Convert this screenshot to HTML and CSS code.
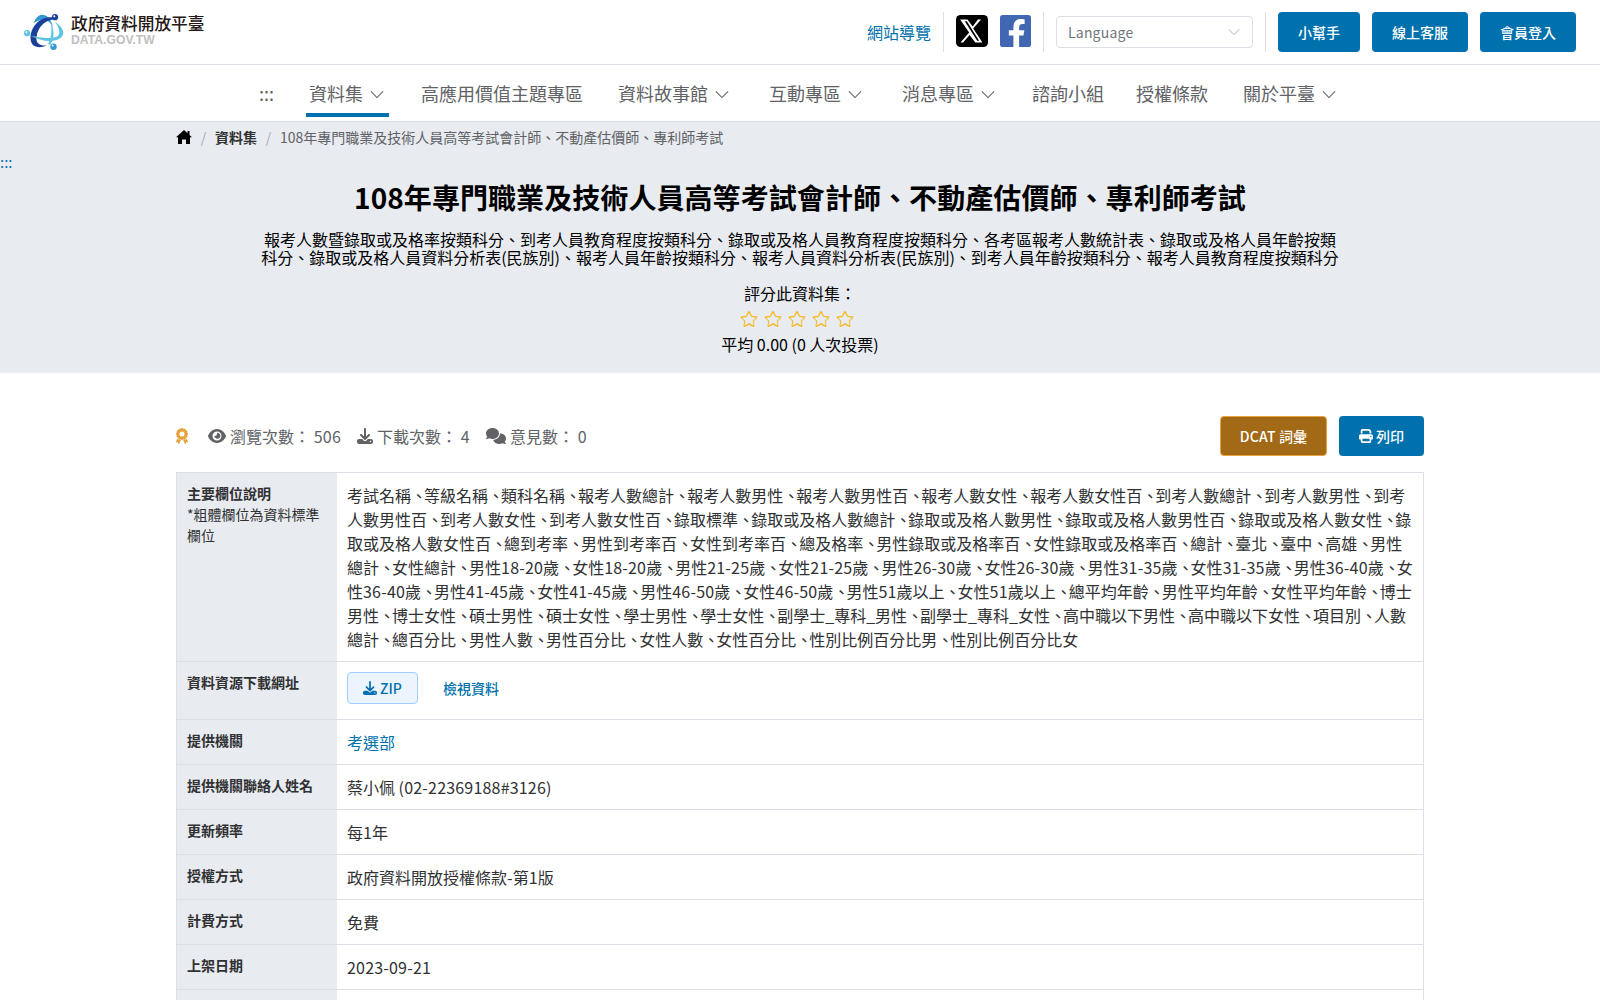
FILE: index.html
```
<!DOCTYPE html>
<html lang="zh-Hant-TW">
<head>
  <meta charset="UTF-8">
  <meta name="viewport" content="width=device-width, initial-scale=1.0">
  <title>108年專門職業及技術人員高等考試會計師、不動產估價師、專利師考試 | 政府資料開放平臺</title>
  <link rel="stylesheet" href="styles.css">
</head>
<body>

  <!-- shared icons -->
  <svg class="sprite" xmlns="http://www.w3.org/2000/svg">
    <symbol id="arrow" viewBox="0 0 16 10"><path d="M1 1.5l7 7 7-7" fill="none" stroke="currentColor" stroke-width="1.2"/></symbol>
    <symbol id="star" viewBox="0 0 576 512"><path fill="currentColor" d="M528.1 171.5L382 150.2 316.700 17.800c-11.700-23.600-45.600-23.900-57.400 0L194 150.200 47.900 171.500c-26.200 3.800-36.700 36.100-17.700 54.600l105.700 103-25 145.500c-4.500 26.300 23.200 46 46.400 33.700L288 439.600l130.700 68.700c23.200 12.200 50.900-7.400 46.400-33.700l-25-145.500 105.700-103c19-18.500 8.500-50.800-17.700-54.600zM405.100 317.500l24.500 142.800L288 385.300 146.400 460.300 170.900 317.500 64 213.300 212.500 191.700 288 60 363.500 191.700 512 213.300z"/></symbol>
    <symbol id="download" viewBox="0 0 512 512"><path fill="currentColor" d="M288 32c0-17.700-14.300-32-32-32s-32 14.300-32 32v242.700l-73.400-73.400c-12.500-12.500-32.800-12.500-45.300 0s-12.500 32.800 0 45.300l128 128c12.500 12.500 32.800 12.500 45.300 0l128-128c12.500-12.500 12.500-32.800 0-45.300s-32.800-12.500-45.300 0L288 274.700V32zM64 352c-35.300 0-64 28.700-64 64v32c0 35.300 28.700 64 64 64h384c35.300 0 64-28.700 64-64v-32c0-35.300-28.700-64-64-64H346.500l-45.300 45.300c-25 25-65.500 25-90.500 0L165.500 352H64zm368 56a24 24 0 1 1 0 48 24 24 0 1 1 0-48z"/></symbol>
  </svg>

  <header class="header">
    <a class="logo" href="#">
      <svg class="logo-mark" viewBox="0 0 40 36">
        <path d="M10 9C13-2 25-3 29 13c-4-7-9-10-19-4z" fill="#3597d3"/>
        <path d="M29 3.500C16 2 6.500 13 6.500 24c0 9 8 11 16 7.500-7 .5-11-3-10-8.500C13.500 15 19 7 29 5.500z" fill="#1b409a"/>
        <path d="M31 8c13 8 10 19-5 19-7 0-13-2-20-5.500 9 2 28 5 29-1.500 1-4-1-8-4-12z" fill="#5dc4e5"/>
        <path d="M27 9c4 9 3 17-1 22l-2-1c3-5 4-12 3-21z" fill="#5dc4e5"/>
        <circle cx="31" cy="3.200" r="3.100" fill="#1b409a"/>
        <circle cx="3.100" cy="19.200" r="3.100" fill="#5dc4e5"/>
        <circle cx="29.500" cy="32.700" r="3.200" fill="#3597d3"/>
        <circle cx="30.300" cy="2.300" r="1" fill="#fff"/><circle cx="2.300" cy="18.300" r="1" fill="#fff"/><circle cx="28.600" cy="31.600" r="1" fill="#fff"/>
      </svg>
      <span class="logo-text"><strong>政府資料開放平臺</strong><small>DATA.GOV.TW</small></span>
    </a>
    <div class="tools">
      <a class="sitemap" href="#">網站導覽</a>
      <div class="social">
        <svg viewBox="0 0 448 448"><rect width="448" height="448" rx="64"/><path fill="#fff" d="M351 64L241.100 189.600 370.300 384H270l-79.800-104.400L99 384H62l122-139.500L57 64h104l72.200 95.500L307 64zM323.700 362L151.900 86H123l173.800 276z"/></svg>
        <svg class="facebook" viewBox="0 0 448 448" preserveAspectRatio="none"><rect width="448" height="448" rx="40" fill="#4267b2"/><path fill="#fff" d="M194 448V288h-66v-73h66v-43c0-78 35-115 112-115 15 0 40 3 50 6v64c-5-1-15-1-27-1-38 0-53 14-53 52v37h76l-13 73h-63v160z"/></svg>
      </div>
      <div class="language"><span>Language</span><svg class="arrow"><use href="#arrow"/></svg></div>
      <div class="buttons">
        <a class="btn" href="#">小幫手</a>
        <a class="btn" href="#">線上客服</a>
        <a class="btn" href="#">會員登入</a>
      </div>
    </div>
  </header>

  <nav class="nav">
    <a class="key" href="#">:::</a>
    <a class="drop active" href="#">資料集<svg class="arrow"><use href="#arrow"/></svg></a>
    <a href="#">高應用價值主題專區</a>
    <a class="drop" href="#">資料故事館<svg class="arrow"><use href="#arrow"/></svg></a>
    <a class="drop" href="#">互動專區<svg class="arrow"><use href="#arrow"/></svg></a>
    <a class="drop" href="#">消息專區<svg class="arrow"><use href="#arrow"/></svg></a>
    <a href="#">諮詢小組</a>
    <a href="#">授權條款</a>
    <a class="drop" href="#">關於平臺<svg class="arrow"><use href="#arrow"/></svg></a>
  </nav>

  <section class="hero">
    <div class="breadcrumb">
      <svg class="home" viewBox="0 0 16 14"><path d="M8 0L0 7.200h2V14h4V9.500h4V14h4V7.200h2L13.500 5V1h-2v2.200z"/></svg>
      <i>/</i><b>資料集</b><i>/</i><span>108年專門職業及技術人員高等考試會計師、不動產估價師、專利師考試</span>
    </div>
    <a class="content-key" href="#">:::</a>
    <h1>108年專門職業及技術人員高等考試會計師、不動產估價師、專利師考試</h1>
    <p class="summary">報考人數暨錄取或及格率按類科分、到考人員教育程度按類科分、錄取或及格人員教育程度按類科分、各考區報考人數統計表、錄取或及格人員年齡按類<br>科分、錄取或及格人員資料分析表(民族別)、報考人員年齡按類科分、報考人員資料分析表(民族別)、到考人員年齡按類科分、報考人員教育程度按類科分</p>
    <div class="rating">評分此資料集：</div>
    <div class="stars">
      <svg><use href="#star"/></svg><svg><use href="#star"/></svg><svg><use href="#star"/></svg><svg><use href="#star"/></svg><svg><use href="#star"/></svg>
    </div>
    <div class="average">平均 0.00 (0 人次投票)</div>
  </section>

  <main class="container">
    <div class="info">
      <svg class="medal" viewBox="0 0 384 512"><path fill-rule="evenodd" d="M173.800 5.500c11-7.300 25.400-7.300 36.400 0L228 17.200c6 3.900 13 5.800 20.100 5.400l21.300-1.300c13.200-.8 25.600 6.400 31.500 18.200l9.600 19.100c3.200 6.400 8.400 11.500 14.700 14.700L344.500 83c11.800 5.900 19 18.300 18.200 31.500l-1.300 21.300c-.4 7.100 1.500 14.200 5.400 20.100l11.800 17.800c7.300 11 7.300 25.400 0 36.400L366.800 228c-3.900 6-5.800 13-5.400 20.100l1.300 21.300c.8 13.200-6.400 25.600-18.200 31.500l-19.100 9.600c-6.400 3.200-11.500 8.400-14.700 14.700L301 344.500c-5.900 11.800-18.300 19-31.500 18.200l-21.300-1.300c-7.100-.4-14.200 1.500-20.100 5.400l-17.800 11.800c-11 7.300-25.400 7.300-36.400 0L156 366.800c-6-3.900-13-5.800-20.100-5.400l-21.300 1.300c-13.200 .8-25.600-6.400-31.500-18.200l-9.600-19.100c-3.200-6.400-8.400-11.500-14.700-14.700L39.500 301c-11.800-5.900-19-18.300-18.200-31.500l1.300-21.300c.4-7.100-1.500-14.200-5.400-20.100L5.500 210.200c-7.300-11-7.300-25.400 0-36.400L17.200 156c3.900-6 5.800-13 5.400-20.100l-1.300-21.300c-.8-13.200 6.400-25.600 18.200-31.500l19.100-9.600C65 70.200 70.200 65 73.400 58.600L83 39.500c5.900-11.800 18.300-19 31.500-18.200l21.300 1.300c7.100 .4 14.200-1.500 20.100-5.400L173.800 5.500zM272 192a80 80 0 1 0-160 0 80 80 0 1 0 160 0zM1.300 441.800L44.400 339.300c9 17 26 32 60 32l25-1 24 15-50.400 119c-6 11-18 9-22 1L52.700 451l-33.400 13c-12 2-23-9-18-22.200zM382.700 441.800L339.600 339.300c-9 17-26 32-60 32l-25-1-24 15 50.400 119c6 11 18 9 22 1l28.300-54 33.400 13c12 2 23-9 18-22.200z"/></svg>
      <span class="stat"><svg class="eye" viewBox="0 0 576 448"><path fill="currentColor" fill-rule="evenodd" d="M288 0C207 0 142 37 95 81 48 124 17 176 3 212c-4 8-4 17 0 25 14 35 45 87 92 130 47 44 112 81 193 81s146-37 193-81c47-43 78-95 92-130 4-8 4-17 0-25-14-36-45-88-92-131C434 37 369 0 288 0zM144 224a144 144 0 1 1 288 0 144 144 0 1 1-288 0zm144-64c0 35-29 64-64 64-7 0-14-1-20-3 0 7 1 14 3 21 14 51 67 82 118 68s82-67 68-118c-13-46-56-76-102-75 2 6 3 13-3 43z"/></svg><span>瀏覽次數：<span class="num"> 506</span></span></span>
      <span class="stat"><svg class="down"><use href="#download"/></svg><span>下載次數：<span class="num"> 4</span></span></span>
      <span class="stat"><svg class="chat" viewBox="0 0 640 512"><path fill="currentColor" d="M208 352c115 0 208-79 208-176S323 0 208 0 0 79 0 176c0 38 15 73 39 102-4 14-14 29-36 48-7 9-1 26 13 26 32 0 67-12 93-26 30 16 64 26 99 26zM448 176c0 112-100 199-222 207 26 75 108 129 206 129 37 0 70-8 99-22 26 14 61 22 93 22 14 0 21-17 12-27-19-17-30-33-35-47 24-28 39-62 39-102 0-87-84-160-192-160z"/></svg><span>意見數：<span class="num"> 0</span></span></span>
      <div class="actions">
        <a class="btn dcat" href="#"><span class="num">DCAT </span>詞彙</a>
        <a class="btn print" href="#"><svg class="printer" viewBox="0 0 512 512"><path fill="currentColor" fill-rule="evenodd" d="M128 0C93 0 64 29 64 64v96h64V64h227l29 29v67h64V93c0-17-7-33-19-45L400 19C388 7 372 0 355 0zM64 192c-35 0-64 29-64 64v96c0 18 14 32 32 32h32v64c0 35 29 64 64 64h256c35 0 64-29 64-64v-64h32c18 0 32-14 32-32v-96c0-35-29-64-64-64zm64 160h256v96H128zM432 248a24 24 0 1 1 0 48 24 24 0 1 1 0-48z"/></svg>列印</a>
      </div>
    </div>

    <div class="table">
      <div class="row fields">
        <div class="label">主要欄位說明<small>*粗體欄位為資料標準欄位</small></div>
        <div class="value" id="fields"></div>
      </div>
      <div class="row resources">
        <div class="label">資料資源下載網址</div>
        <div class="value"><a class="zip" href="#"><svg><use href="#download"/></svg>ZIP</a><a class="view" href="#">檢視資料</a></div>
      </div>
      <div class="row"><div class="label">提供機關</div><div class="value"><a href="#">考選部</a></div></div>
      <div class="row"><div class="label">提供機關聯絡人姓名</div><div class="value">蔡小佩 <span class="num">(02-22369188#3126)</span></div></div>
      <div class="row"><div class="label">更新頻率</div><div class="value">每1年</div></div>
      <div class="row"><div class="label">授權方式</div><div class="value">政府資料開放授權條款<span class="num">-</span>第<span class="num">1</span>版</div></div>
      <div class="row"><div class="label">計費方式</div><div class="value">免費</div></div>
      <div class="row"><div class="label">上架日期</div><div class="value"><span class="num">2023-09-21</span></div></div>
      <div class="row"><div class="label"></div><div class="value"></div></div>
    </div>
  </main>

  <script>
    const fields = '考試名稱、等級名稱、類科名稱、報考人數總計、報考人數男性、報考人數男性百、報考人數女性、報考人數女性百、到考人數總計、到考人數男性、到考人數男性百、到考人數女性、到考人數女性百、錄取標準、錄取或及格人數總計、錄取或及格人數男性、錄取或及格人數男性百、錄取或及格人數女性、錄取或及格人數女性百、總到考率、男性到考率百、女性到考率百、總及格率、男性錄取或及格率百、女性錄取或及格率百、總計、臺北、臺中、高雄、男性總計、女性總計、男性18-20歲、女性18-20歲、男性21-25歲、女性21-25歲、男性26-30歲、女性26-30歲、男性31-35歲、女性31-35歲、男性36-40歲、女性36-40歲、男性41-45歲、女性41-45歲、男性46-50歲、女性46-50歲、男性51歲以上、女性51歲以上、總平均年齡、男性平均年齡、女性平均年齡、博士男性、博士女性、碩士男性、碩士女性、學士男性、學士女性、副學士_專科_男性、副學士_專科_女性、高中職以下男性、高中職以下女性、項目別、人數總計、總百分比、男性人數、男性百分比、女性人數、女性百分比、性別比例百分比男、性別比例百分比女';

    document.getElementById('fields').innerHTML = fields.split('、')
      .map(name => name.replace(/[\d-]+/, '<span class="num">$&</span>'))
      .join('<span class="sep">、</span>');
  </script>

</body>
</html>
```
FILE: styles.css
```
* {
  box-sizing: border-box;
}
body {
  margin: 0;
  height: 1000px;
  overflow: hidden;
  font-family: "Noto Sans CJK TC", sans-serif;
  font-size: 16px;
  color: #303133;
  background-color: #fff;
}
a {
  color: #0071ad;
  text-decoration: none;
}
.sprite {
  display: none;
}
/* figures run slightly wider than the font's own spacing */
.num {
  letter-spacing: 0.19px;
}
.header {
  display: flex;
  justify-content: space-between;
  height: 65px;
  padding: 12px 24px 0;
  border-bottom: 1px solid #dcdfe6;
}
.logo {
  display: flex;
  gap: 7px;
  padding-top: 2px;
}
.logo-mark {
  width: 40px;
  height: 36px;
}
.logo-text strong {
  display: block;
  height: 20px;
  line-height: 18px;
  font-size: 16.700px;
  font-weight: 500;
  color: #231815;
}
.logo-text small {
  display: block;
  line-height: 13px;
  font-family: "Liberation Sans", Arial, sans-serif;
  font-size: 12.200px;
  font-weight: bold;
  color: #bfbfc0;
}
.tools {
  display: flex;
  height: 40px;
  line-height: 40px;
}
.sitemap {
  padding-right: 12px;
}
.social {
  display: flex;
  gap: 12px;
  padding: 3px 12px;
  border-left: 1px solid #dcdfe6;
  border-right: 1px solid #dcdfe6;
}
.social svg {
  width: 32px;
  height: 32px;
}
.social .facebook {
  width: 31px;
}
.language {
  display: flex;
  justify-content: space-between;
  align-items: center;
  width: 197px;
  height: 32px;
  margin: 4px 12px;
  padding: 0 12px 0 11px;
  border: 1px solid #dcdfe6;
  border-radius: 4px;
  font-size: 14px;
  letter-spacing: 0.2px;
  color: #73767a;
}
.language .arrow {
  width: 12px;
  height: 8px;
  margin: 0;
  color: #a8abb2;
}
.buttons {
  display: flex;
  gap: 12px;
  padding-left: 12px;
  border-left: 1px solid #dcdfe6;
}
.btn {
  height: 40px;
  padding: 0 20px;
  border-radius: 4px;
  line-height: 40px;
  font-size: 14px;
  font-weight: 500;
  color: #fff;
  background-color: #0071ad;
}
.nav {
  display: flex;
  height: 57px;
  padding-left: 259px;
  border-bottom: 1px solid #dcdfe6;
}
.nav a {
  height: 52px;
  margin-right: 32px;
  line-height: 56px;
  font-size: 18px;
  color: #606266;
}
.nav .key {
  width: 15px;
}
.nav .drop {
  padding: 0 5px 0 3px;
}
.nav .active {
  border-bottom: 4px solid #0071ad;
}
.arrow {
  width: 14px;
  height: 9px;
  margin-left: 7px;
  vertical-align: 2px;
}
.hero {
  height: 251px;
  text-align: center;
  color: #000;
  background-color: #e8ebf0;
}
.breadcrumb {
  display: flex;
  align-items: center;
  height: 30px;
  padding-left: 176px;
  font-size: 14px;
  color: #606266;
}
.breadcrumb i {
  width: 6px;
  margin: 0 8.500px;
  font-style: normal;
  color: #a8abb2;
}
.breadcrumb b {
  color: #303133;
}
.home {
  width: 16px;
  height: 14px;
}
.content-key {
  display: block;
  height: 20px;
  line-height: 20px;
  font-size: 15px;
  text-align: left;
}
h1 {
  height: 42px;
  margin: 4px 0 0;
  line-height: 42px;
  font-size: 28px;
  font-weight: 700;
  letter-spacing: 0.07px;
}
.summary {
  margin: 12px 0 0;
  line-height: 18px;
}
.rating {
  margin-top: 15px;
  line-height: 24px;
}
.stars {
  display: flex;
  justify-content: center;
  gap: 6px;
  height: 26px;
  padding: 6px 6px 0 0;
  color: #f7ba2a;
}
.stars svg {
  width: 18px;
  height: 16px;
}
.average {
  line-height: 26px;
}
.container {
  width: 1248px;
  margin: 0 auto;
  padding-top: 43px;
}
.info {
  display: flex;
  align-items: center;
  height: 40px;
  margin-bottom: 16px;
  color: #606266;
}
.info .num {
  white-space: pre;
}
.medal {
  width: 12px;
  height: 16px;
  margin-right: 20px;
  fill: #e6a23c;
}
.stat {
  display: flex;
  align-items: center;
  gap: 4px;
  margin-right: 16px;
}
.eye {
  width: 18px;
  height: 14px;
}
.down {
  width: 16px;
  height: 16px;
}
.chat {
  width: 20px;
  height: 16px;
}
.actions {
  display: flex;
  gap: 12px;
  margin-left: auto;
}
.dcat {
  border: 1px solid #e6a23c;
  padding: 0 19px;
  line-height: 38px;
  background-color: #a26916;
}
.print {
  display: flex;
  align-items: center;
  gap: 3px;
}
.printer {
  width: 14px;
  height: 14px;
}
.table {
  border: 1px solid #dcdfe6;
}
.row {
  display: flex;
  height: 45px;
  border-bottom: 1px solid #dcdfe6;
}
.label {
  width: 160px;
  padding: 10px;
  line-height: 21px;
  font-size: 14px;
  font-weight: 700;
  background-color: #e8ebf0;
}
.label small {
  display: block;
  font-size: 14px;
  font-weight: 400;
}
.value {
  flex: 1;
  padding: 10px;
  line-height: 24px;
}
.fields {
  height: 189px;
}
.sep {
  letter-spacing: -3px;
}
.resources {
  height: 58px;
}
.resources .value {
  display: flex;
  gap: 25px;
  line-height: 32px;
  font-size: 14px;
  font-weight: 500;
}
.zip {
  display: flex;
  align-items: center;
  gap: 3px;
  width: 71px;
  height: 32px;
  padding-left: 15px;
  border: 1px solid #a0cfff;
  border-radius: 4px;
  background-color: #ecf5ff;
}
.zip svg {
  width: 14px;
  height: 14px;
}
```
